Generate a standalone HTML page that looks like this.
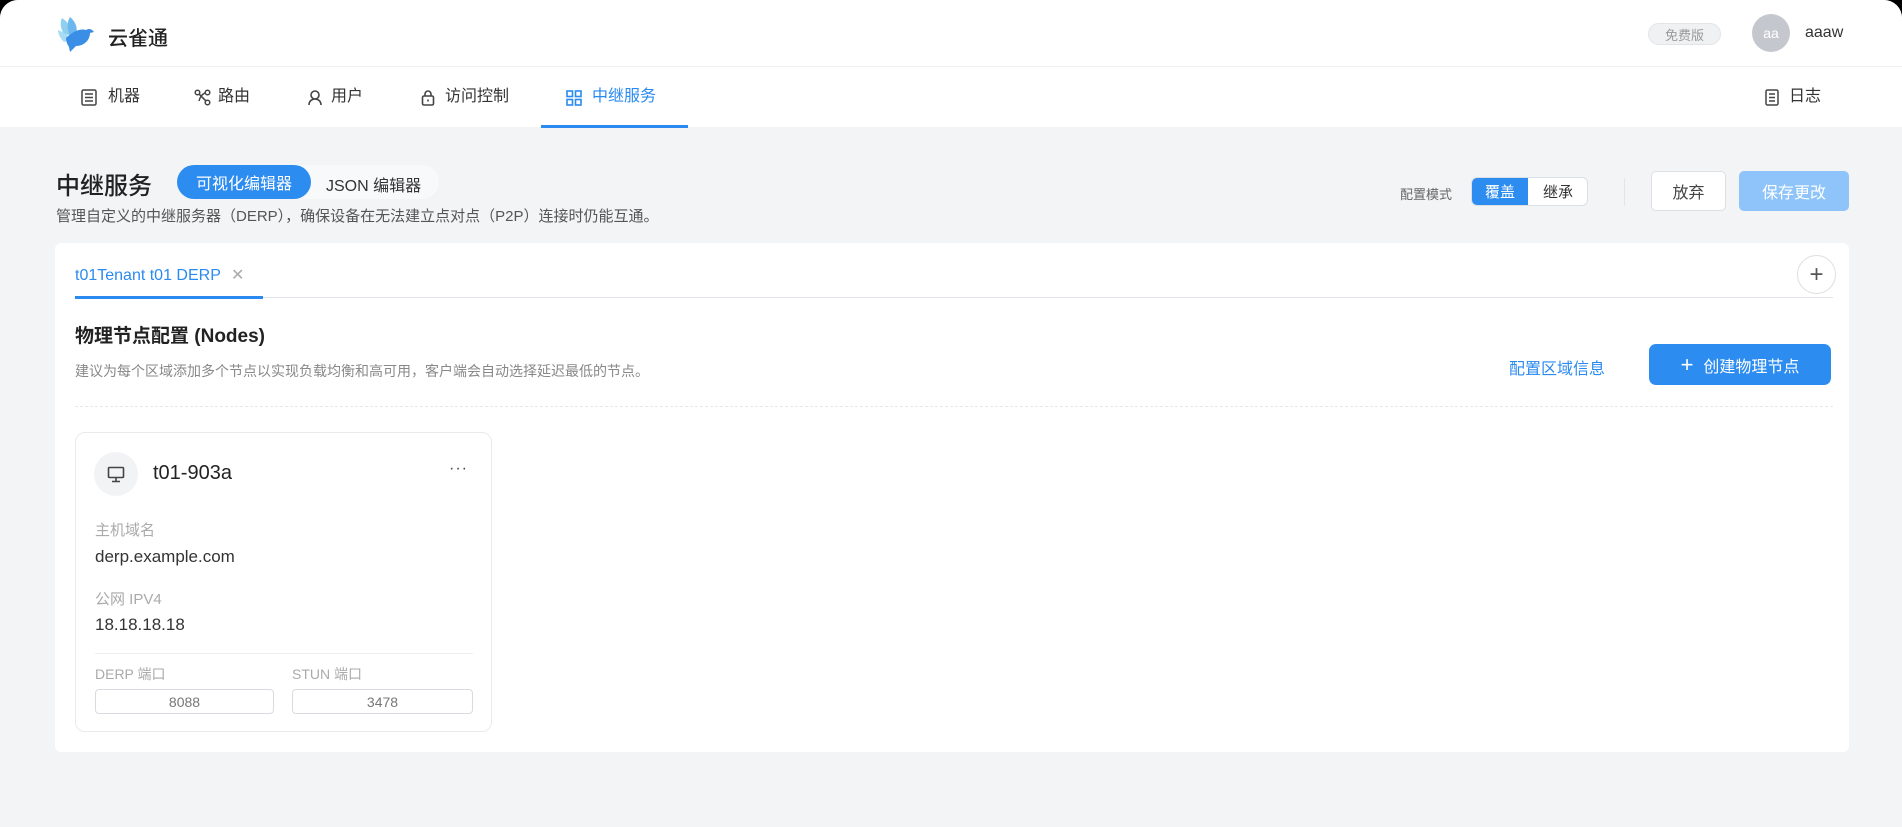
<!DOCTYPE html>
<html><head><meta charset="utf-8"><style>
*{box-sizing:border-box;margin:0;padding:0}
body{width:1902px;height:827px;background:#000;font-family:"Liberation Sans","Noto Sans CJK SC",sans-serif;color:#222;overflow:hidden;position:relative}
.scr{position:absolute;left:0;top:0;width:1902px;height:827px;background:#f2f4f6;border-radius:18px 18px 0 0;overflow:hidden}
.a{position:absolute;white-space:nowrap}
.c{display:flex;align-items:center;justify-content:center}
</style></head><body><div class="scr">
<!-- header -->
<div class="a" style="left:0;top:0;width:1902px;height:67px;background:#fff;border-bottom:1px solid #eef0f2"></div>
<div class="a" style="left:0;top:67px;width:1902px;height:60px;background:#fff"></div>
<svg class="a" style="left:54px;top:14px" width="42" height="40" viewBox="0 0 42 40">
<path d="M8 4 C14 8 18 14 18 22 L10 20 C6 14 6 8 8 4Z" fill="#8fd0f0"/>
<path d="M16 3 C22 8 24 14 22 22 L15 20 C13 14 13 8 16 3Z" fill="#6cb8ee"/>
<path d="M4 16 C10 18 14 22 18 26 L10 28 C6 24 4 20 4 16Z" fill="#a8dcf4"/>
<path d="M12 24 C18 18 26 14 32 16 C35 14 38 15 40 18 L36 19 C36 26 30 32 22 32 L16 38 L15 33 C13 30 12 27 12 24Z" fill="#3b8ee6"/>
</svg>
<div class="a" style="left:108px;top:22px;font-size:20px;font-weight:500;color:#222">云雀通</div>
<div class="a c" style="left:1648px;top:23px;width:73px;height:22px;border-radius:11px;background:#f0f1f3;border:1px solid #e2e4e7;font-size:13px;color:#999">免费版</div>
<div class="a c" style="left:1752px;top:14px;width:38px;height:38px;border-radius:50%;background:#c4c7cd;color:#fff;font-size:14px">aa</div>
<div class="a" style="left:1805px;top:24px;font-size:16px;color:#333">aaaw</div>
<!-- nav -->
<div class="a" style="top:87px;left:81px;font-size:16px;color:#333;line-height:20px">
<svg style="position:absolute;left:0;top:2px" width="16" height="17" viewBox="0 0 16 17" fill="none" stroke="#444" stroke-width="1.5"><rect x="1" y="1" width="14" height="15" rx="1.5"/><path d="M4 5h8M4 8.5h8M4 12h8"/></svg><span style="position:absolute;left:27px">机器</span></div>
<div class="a" style="top:87px;left:194px;font-size:16px;color:#333;line-height:20px"><svg style="position:absolute;left:0;top:2px" width="17" height="17" viewBox="0 0 17 17" fill="none" stroke="#444" stroke-width="1.5"><circle cx="3.5" cy="3.5" r="2.3"/><circle cx="13.5" cy="3.5" r="2.3"/><circle cx="13.5" cy="13.5" r="2.3"/><path d="M5.2 5.2l6.6 6.6M11.5 3.8C8 5 6 8 5 12"/></svg><span style="position:absolute;left:24px">路由</span></div>
<div class="a" style="top:87px;left:307px;font-size:16px;color:#333;line-height:20px"><svg style="position:absolute;left:0;top:2px" width="17" height="17" viewBox="0 0 17 17" fill="none" stroke="#444" stroke-width="1.6"><circle cx="8" cy="6" r="4"/><path d="M2 16c0-4 3-6 6-6s6 2 6 6"/></svg><span style="position:absolute;left:24px">用户</span></div>
<div class="a" style="top:87px;left:421px;font-size:16px;color:#333;line-height:20px"><svg style="position:absolute;left:0;top:2px" width="14" height="17" viewBox="0 0 14 17" fill="none" stroke="#444" stroke-width="1.6"><rect x="1.5" y="7" width="11" height="9" rx="1.5"/><path d="M4 7V5a3 3 0 016 0v2"/><path d="M7 10.5v2"/></svg><span style="position:absolute;left:24px">访问控制</span></div>
<div class="a" style="top:87px;left:566px;font-size:16px;color:#2b8af0;line-height:20px"><svg style="position:absolute;left:0;top:3px" width="16" height="16" viewBox="0 0 16 16" fill="none" stroke="#2b8af0" stroke-width="1.6"><rect x="1" y="1" width="5.5" height="5.5"/><rect x="9.5" y="1" width="5.5" height="5.5"/><rect x="1" y="9.5" width="5.5" height="5.5"/><rect x="9.5" y="9.5" width="5.5" height="5.5"/></svg><span style="position:absolute;left:26px">中继服务</span></div>
<div class="a" style="left:541px;top:125px;width:147px;height:3px;background:#2b8af0"></div>
<div class="a" style="top:87px;left:1765px;font-size:16px;color:#333;line-height:20px"><svg style="position:absolute;left:0;top:2px" width="14" height="17" viewBox="0 0 14 17" fill="none" stroke="#444" stroke-width="1.5"><rect x="1" y="1" width="12" height="15" rx="1.5"/><path d="M4 5h6M4 8.5h6M4 12h6"/></svg><span style="position:absolute;left:24px">日志</span></div>
<!-- title row -->
<div class="a" style="left:56px;top:166px;font-size:24px;font-weight:500;color:#222">中继服务</div>
<div class="a" style="left:177px;top:165px;width:262px;height:34px;border-radius:17px;background:#f8f9fa"></div>
<div class="a c" style="left:177px;top:165px;width:134px;height:34px;border-radius:17px;background:#2d8cf0;color:#fff;font-size:16px">可视化编辑器</div>
<div class="a" style="left:326px;top:172px;font-size:16px;color:#333">JSON 编辑器</div>
<div class="a" style="left:56px;top:205px;font-size:15px;color:#555">管理自定义的中继服务器（DERP），确保设备在无法建立点对点（P2P）连接时仍能互通。</div>
<div class="a" style="left:1400px;top:184px;font-size:13px;color:#666">配置模式</div>
<div class="a" style="left:1471px;top:177px;width:117px;height:29px;border:1px solid #dcdfe3;border-radius:6px;background:#fff;overflow:hidden">
<div class="a c" style="left:0;top:0;width:56px;height:27px;background:#2d8cf0;color:#fff;font-size:15px">覆盖</div>
<div class="a c" style="left:56px;top:0;width:60px;height:27px;color:#333;font-size:15px">继承</div></div>
<div class="a" style="left:1624px;top:178px;width:1px;height:28px;background:#e2e4e7"></div>
<div class="a c" style="left:1651px;top:171px;width:75px;height:40px;border:1px solid #dcdfe3;border-radius:5px;background:#fff;font-size:16px;color:#444">放弃</div>
<div class="a c" style="left:1739px;top:171px;width:110px;height:40px;border-radius:5px;background:#8ec4fa;font-size:16px;color:#fff">保存更改</div>
<!-- main card -->
<div class="a" style="left:55px;top:243px;width:1794px;height:509px;background:#fff;border-radius:6px"></div>
<div class="a" style="left:75px;top:265px;font-size:16px;color:#2b8af0">t01Tenant t01 DERP <span style="color:#aaa;margin-left:6px">✕</span></div>
<div class="a" style="left:75px;top:297px;width:1758px;height:1px;background:#dfe2e6"></div>
<div class="a" style="left:75px;top:296px;width:188px;height:3px;background:#2b8af0"></div>
<div class="a c" style="left:1797px;top:255px;width:39px;height:39px;border-radius:50%;border:1px solid #dcdfe3;background:#fff;font-size:24px;color:#555;font-weight:300">+</div>
<div class="a" style="left:75px;top:321px;font-size:19px;font-weight:700;color:#222">物理节点配置 (Nodes)</div>
<div class="a" style="left:75px;top:361px;font-size:14px;color:#888">建议为每个区域添加多个节点以实现负载均衡和高可用，客户端会自动选择延迟最低的节点。</div>
<div class="a" style="left:75px;top:406px;width:1758px;border-top:1px dashed #e6e8eb"></div>
<div class="a" style="left:1509px;top:355px;font-size:16px;color:#2b8af0">配置区域信息</div>
<div class="a c" style="left:1649px;top:344px;width:182px;height:41px;border-radius:7px;background:#2d8cf0;color:#fff;font-size:16px"><span style="font-size:22px;margin-right:10px;font-weight:300">+</span>创建物理节点</div>
<!-- node card -->
<div class="a" style="left:75px;top:432px;width:417px;height:300px;border:1px solid #e8eaed;border-radius:10px;background:#fff"></div>
<div class="a c" style="left:94px;top:452px;width:44px;height:44px;border-radius:50%;background:#f2f3f5">
<svg width="18" height="17" viewBox="0 0 18 17" fill="none" stroke="#444" stroke-width="1.6"><rect x="1.5" y="1.5" width="15" height="10" rx="1"/><path d="M9 12v3M5 15.5h8"/></svg></div>
<div class="a" style="left:153px;top:462px;font-size:20px;font-weight:500;color:#222">t01-903a</div>
<div class="a" style="left:449px;top:460px;font-size:16px;color:#444;letter-spacing:1px">···</div>
<div class="a" style="left:95px;top:519px;font-size:15px;color:#aaa">主机域名</div>
<div class="a" style="left:95px;top:547px;font-size:17px;color:#333">derp.example.com</div>
<div class="a" style="left:95px;top:588px;font-size:15px;color:#aaa">公网 IPV4</div>
<div class="a" style="left:95px;top:615px;font-size:17px;color:#333">18.18.18.18</div>
<div class="a" style="left:95px;top:653px;width:378px;height:1px;background:#eceef0"></div>
<div class="a" style="left:95px;top:664px;font-size:14px;color:#aaa">DERP 端口</div>
<div class="a" style="left:292px;top:664px;font-size:14px;color:#aaa">STUN 端口</div>
<div class="a c" style="left:95px;top:689px;width:179px;height:25px;border:1px solid #d8dbdf;border-radius:4px;font-size:14px;color:#777">8088</div>
<div class="a c" style="left:292px;top:689px;width:181px;height:25px;border:1px solid #d8dbdf;border-radius:4px;font-size:14px;color:#777">3478</div>
</div></body></html>
